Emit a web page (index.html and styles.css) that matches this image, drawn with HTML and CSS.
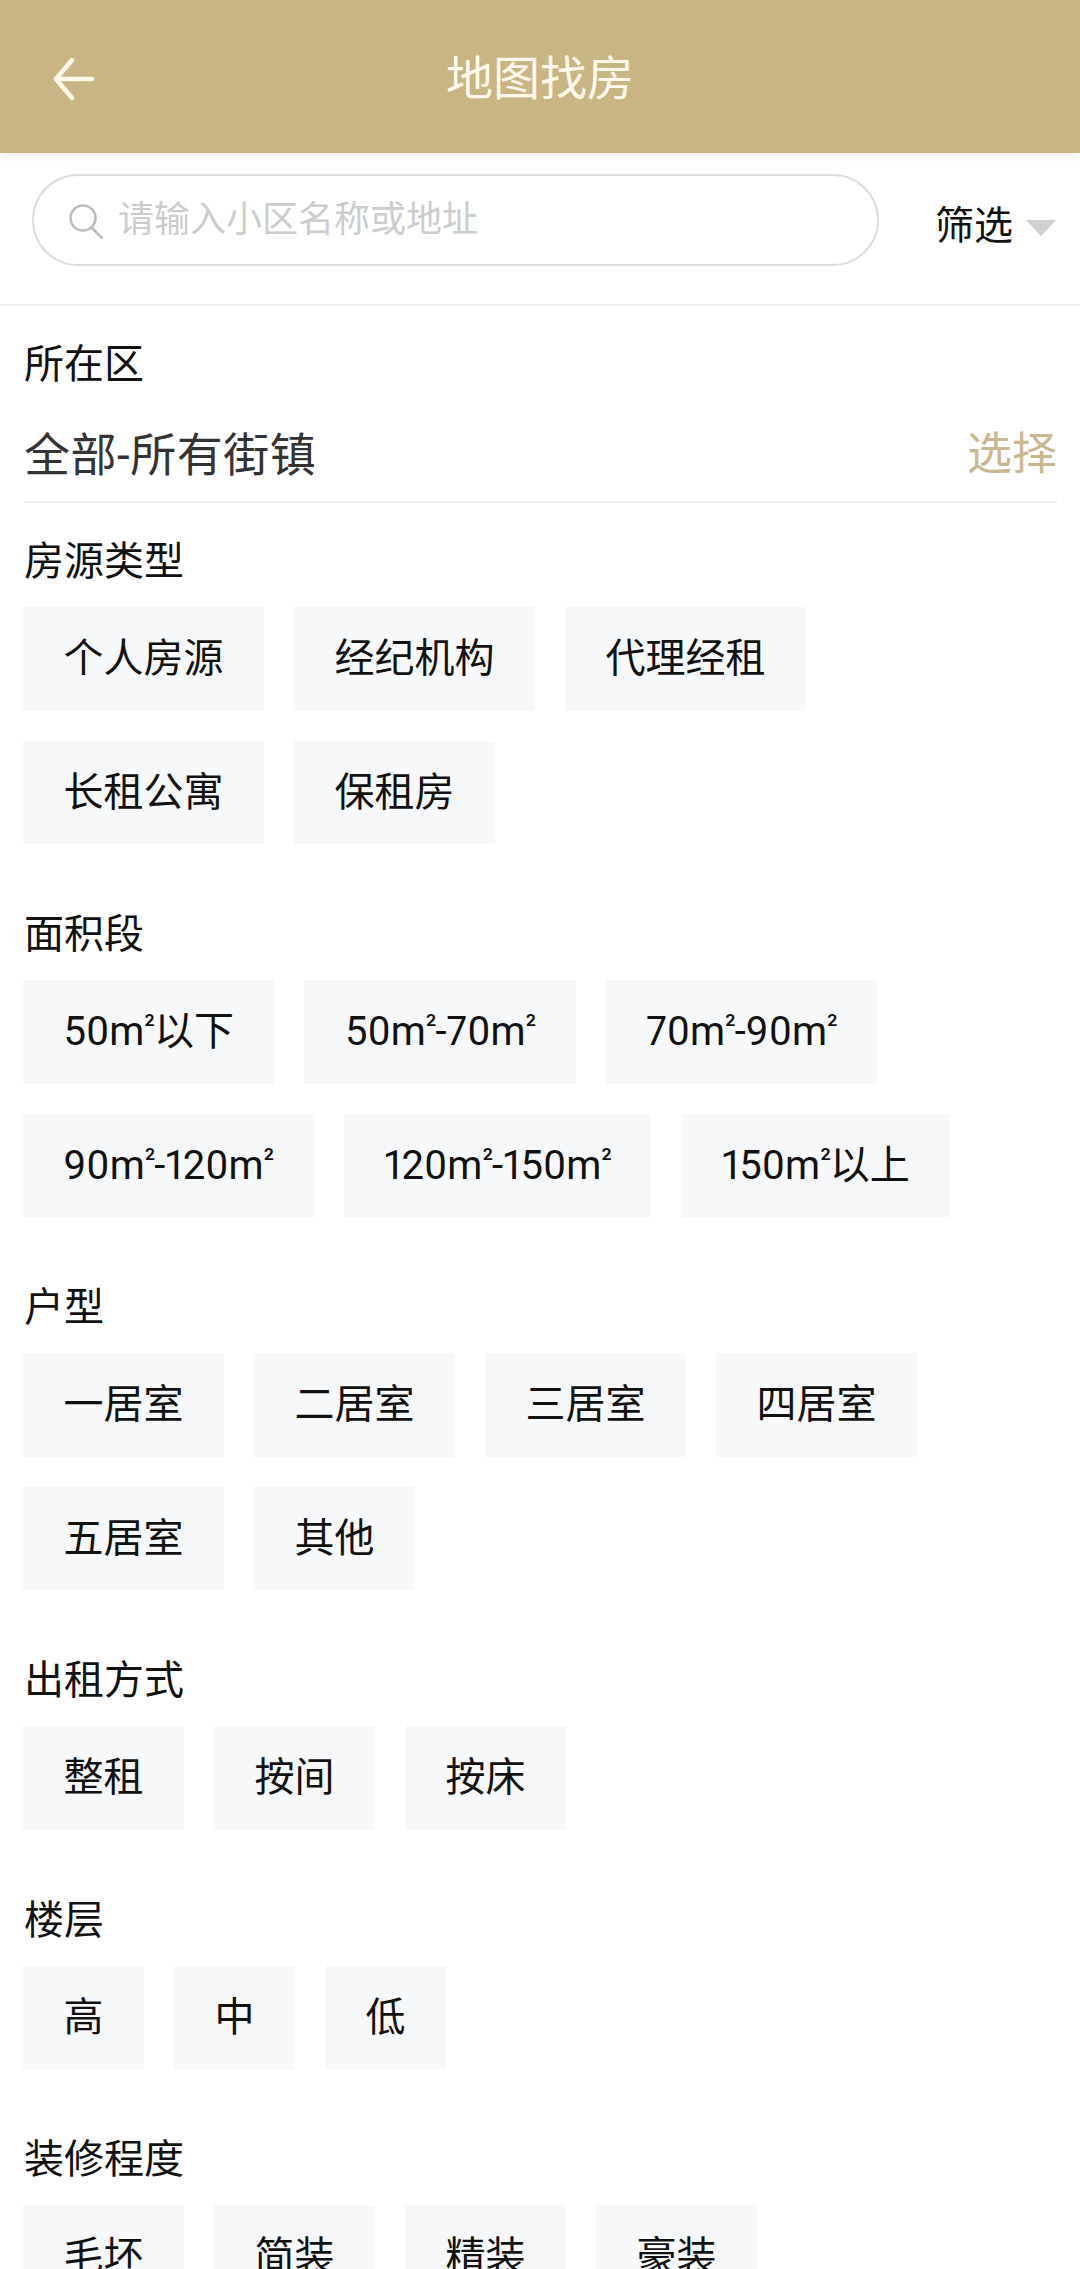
FILE: index.html
```html
<!DOCTYPE html>
<html lang="zh-CN">
<head>
<meta charset="utf-8">
<title>地图找房</title>
<link rel="stylesheet" href="styles.css">
</head>
<body>
<header class="topbar">
  <svg class="back" viewBox="0 0 42 42" width="42" height="42" fill="none" stroke="#fff9ec" stroke-width="4.5" stroke-linecap="round" stroke-linejoin="round"><path d="M39 21H3"/><path d="M19 2 3 21l16 19"/></svg>
  <h1 class="title">地图找房</h1>
</header>
<div class="searchrow">
  <div class="searchbox">
    <svg class="mag" viewBox="0 0 36 36" width="36" height="36" fill="none" stroke="#bdbdbd" stroke-width="2.6" stroke-linecap="round"><circle cx="15" cy="15" r="12.5"/><path d="M24 25l10 10"/></svg>
    <span class="placeholder">请输入小区名称或地址</span>
  </div>
  <div class="filter"><span>筛选</span><i class="caret"></i></div>
</div>
<main class="content">
  <div class="district">
    <div class="label">所在区</div>
    <div class="picker"><span class="value">全部-所有街镇</span><span class="pick">选择</span></div>
  </div>
  <section class="group first">
    <div class="label">房源类型</div>
    <div class="chips"><span class="chip">个人房源</span><span class="chip">经纪机构</span><span class="chip">代理经租</span><span class="chip">长租公寓</span><span class="chip">保租房</span></div>
  </section>
  <section class="group">
    <div class="label">面积段</div>
    <div class="chips">
      <span class="chip">50m<b class="sq">²</b>以下</span>
      <span class="chip">50m<b class="sq">²</b>-70m<b class="sq">²</b></span>
      <span class="chip">70m<b class="sq">²</b>-90m<b class="sq">²</b></span>
      <span class="chip">90m<b class="sq">²</b>-120m<b class="sq">²</b></span>
      <span class="chip">120m<b class="sq">²</b>-150m<b class="sq">²</b></span>
      <span class="chip">150m<b class="sq">²</b>以上</span>
    </div>
  </section>
  <section class="group">
    <div class="label">户型</div>
    <div class="chips"><span class="chip">一居室</span><span class="chip">二居室</span><span class="chip">三居室</span><span class="chip">四居室</span><span class="chip">五居室</span><span class="chip">其他</span></div>
  </section>
  <section class="group">
    <div class="label">出租方式</div>
    <div class="chips"><span class="chip">整租</span><span class="chip">按间</span><span class="chip">按床</span></div>
  </section>
  <section class="group">
    <div class="label">楼层</div>
    <div class="chips"><span class="chip">高</span><span class="chip">中</span><span class="chip">低</span></div>
  </section>
  <section class="group">
    <div class="label">装修程度</div>
    <div class="chips"><span class="chip">毛坯</span><span class="chip">简装</span><span class="chip">精装</span><span class="chip">豪装</span></div>
  </section>
</main>
</body>
</html>
```
FILE: styles.css
```css
* { box-sizing: border-box; }
html, body { margin: 0; height: 2269px; overflow: hidden; background: #fff; }
body { font-family: Roboto, "Noto Sans CJK SC", sans-serif; color: #111; font-size: 40px; }

.topbar {
  height: 153px;
  background: #c9b483;
  display: flex;
  align-items: center;
  justify-content: center;
  padding-top: 5px;
  box-shadow: 0 3px 8px rgba(120, 100, 60, 0.12);
  position: relative;
}
.back { position: absolute; left: 53px; top: 58px; }
.title { margin: 0; font-size: 47px; font-weight: 400; line-height: 60px; color: #fff9ec; }

.searchrow {
  height: 153px;
  border-bottom: 2px solid #eeeeee;
  display: flex;
  align-items: flex-start;
  padding: 21px 24px 0 32px;
  justify-content: space-between;
}
.searchbox {
  width: 847px;
  height: 92px;
  border: 2px solid #dddddd;
  border-radius: 46px;
  display: flex;
  align-items: center;
  padding-left: 34px;
  gap: 14px;
}
.mag { flex: none; margin-top: 2px; }
.placeholder { font-size: 36px; color: #cccccc; line-height: 50px; }
.filter { display: flex; align-items: center; gap: 13px; height: 56px; margin-top: 20px; font-size: 39px; }
.caret {
  width: 0;
  height: 0;
  border-left: 15px solid transparent;
  border-right: 15px solid transparent;
  border-top: 16px solid #cfcfcf;
  margin-top: 12px;
}

.content { padding: 0 23px; }
.label { font-size: 40px; line-height: 56px; color: #111; padding-left: 1px; }
.district { padding-top: 31px; }
.picker {
  display: flex;
  justify-content: space-between;
  font-size: 46px;
  line-height: 60px;
  color: #333;
  margin: 32px 0 0 1px;
  padding-bottom: 16px;
  border-bottom: 2px solid #eeeeee;
}
.value { letter-spacing: 0.5px; }
.pick { color: #c9b88f; font-size: 45px; }

.group { padding-top: 63px; }
.group.first { padding-top: 31px; }
.chips { display: flex; flex-wrap: wrap; gap: 30px; margin-top: 17px; }
.chip {
  height: 103.5px;
  line-height: 103.5px;
  padding: 0 40.5px;
  background: #f7f8fa;
  font-size: 40px;
  color: #111;
  white-space: nowrap;
  font-feature-settings: "pnum" 1;
}
.sq { font-weight: 400; font-size: 29px; letter-spacing: -1px; line-height: 0; vertical-align: 10px; }
```
